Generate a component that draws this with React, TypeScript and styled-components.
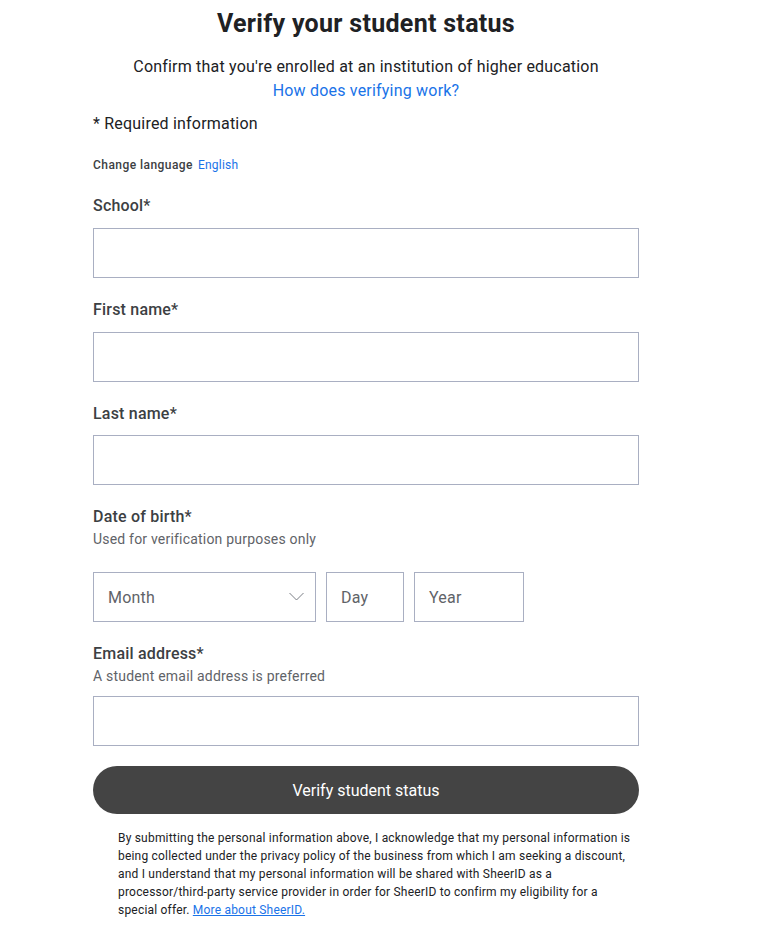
import React from 'react';
import styled, {createGlobalStyle} from 'styled-components';

const GlobalStyle = createGlobalStyle`
  body {
    margin: 0;
    background: #ffffff;
    font-family: Roboto, "Noto Sans", Arial, sans-serif;
    color: #202124;
    letter-spacing: 0.2px;
  }
`;

const Page = styled.main`
  width: 546px;
  padding: 8px 0 0 93px;
`;

const Title = styled.h1`
  margin: 0;
  text-align: center;
  font-size: 25px;
  line-height: 32px;
  font-weight: 700;
  letter-spacing: 0.3px;
  color: #202124;
`;

const Subtitle = styled.p`
  margin: 15px 0 0;
  text-align: center;
  font-size: 16px;
  line-height: 24px;
  color: #202124;
`;

const HelpLink = styled.a`
  display: block;
  text-align: center;
  font-size: 16px;
  line-height: 24px;
  color: #1a73e8;
  text-decoration: none;
`;

const Required = styled.p`
  margin: 9px 0 0;
  font-size: 16px;
  line-height: 24px;
`;

const LanguageRow = styled.div`
  display: flex;
  gap: 5px;
  margin-top: 21px;
  font-size: 12px;
  line-height: 16px;
  letter-spacing: 0.45px;
`;

const LanguageLabel = styled.span`
  font-weight: 500;
  color: #3c4043;
`;

const LanguageValue = styled.span`
  color: #1a73e8;
  letter-spacing: 0.2px;
`;

const Field = styled.div<{$top: number}>`
  margin-top: ${p => p.$top}px;
  display: flex;
  flex-direction: column;
`;

const Label = styled.label`
  font-size: 16px;
  line-height: 24px;
  font-weight: 500;
  color: #3c4043;
`;

const Hint = styled.span`
  font-size: 14px;
  line-height: 20px;
  color: #5f6368;
`;

const TextInput = styled.input<{$gap: number}>`
  box-sizing: border-box;
  margin-top: ${p => p.$gap}px;
  width: 546px;
  height: 50px;
  border: 1px solid #a9afc2;
  border-radius: 0;
  padding: 0 14px;
  font: inherit;
  font-size: 16px;
  outline: none;
`;

const DateRow = styled.div`
  display: flex;
  gap: 10px;
  margin-top: 23px;
`;

const Box = styled.div<{$w: number}>`
  box-sizing: border-box;
  width: ${p => p.$w}px;
  height: 50px;
  border: 1px solid #a9afc2;
  display: flex;
  align-items: center;
  justify-content: space-between;
  padding: 0 11px 0 14px;
  font-size: 16px;
  color: #5f6368;
`;

const ChevronIcon = styled.svg`
  margin-top: -2px;
`;

const Chevron = () => (
  <ChevronIcon width="15" height="9" viewBox="0 0 15 9" fill="none">
    <path d="M0.5 1l7 7 7-7" stroke="#7a7e85" strokeWidth="1"/>
  </ChevronIcon>
);

const SubmitButton = styled.button`
  margin-top: 20px;
  width: 546px;
  height: 48px;
  border: none;
  border-radius: 24px;
  background: #444444;
  color: #ffffff;
  font: inherit;
  font-size: 16px;
`;

const Disclaimer = styled.p`
  margin: 15px 0 0;
  padding: 0 0 0 25px;
  font-size: 12px;
  line-height: 18px;
  color: #202124;
  white-space: nowrap;
`;

const InlineLink = styled.a`
  color: #1a73e8;
  text-decoration: underline;
`;

export default function App() {
  return (
    <>
      <GlobalStyle/>
      <Page>
        <Title>Verify your student status</Title>
        <Subtitle>Confirm that you're enrolled at an institution of higher education</Subtitle>
        <HelpLink>How does verifying work?</HelpLink>
        <Required>* Required information</Required>
        <LanguageRow>
          <LanguageLabel>Change language</LanguageLabel>
          <LanguageValue>English</LanguageValue>
        </LanguageRow>

        <Field $top={21}>
          <Label>School*</Label>
          <TextInput $gap={10}/>
        </Field>
        <Field $top={20}>
          <Label>First name*</Label>
          <TextInput $gap={10}/>
        </Field>
        <Field $top={20}>
          <Label>Last name*</Label>
          <TextInput $gap={9}/>
        </Field>

        <Field $top={20}>
          <Label>Date of birth*</Label>
          <Hint>Used for verification purposes only</Hint>
          <DateRow>
            <Box $w={223}>Month<Chevron/></Box>
            <Box $w={78}>Day</Box>
            <Box $w={110}>Year</Box>
          </DateRow>
        </Field>

        <Field $top={20}>
          <Label>Email address*</Label>
          <Hint>A student email address is preferred</Hint>
          <TextInput $gap={10}/>
        </Field>

        <SubmitButton>Verify student status</SubmitButton>

        <Disclaimer>
          By submitting the personal information above, I acknowledge that my personal information is<br/>
          being collected under the privacy policy of the business from which I am seeking a discount,<br/>
          and I understand that my personal information will be shared with SheerID as a<br/>
          processor/third-party service provider in order for SheerID to confirm my eligibility for a<br/>
          special offer. <InlineLink>More about SheerID.</InlineLink>
        </Disclaimer>
      </Page>
    </>
  );
}
